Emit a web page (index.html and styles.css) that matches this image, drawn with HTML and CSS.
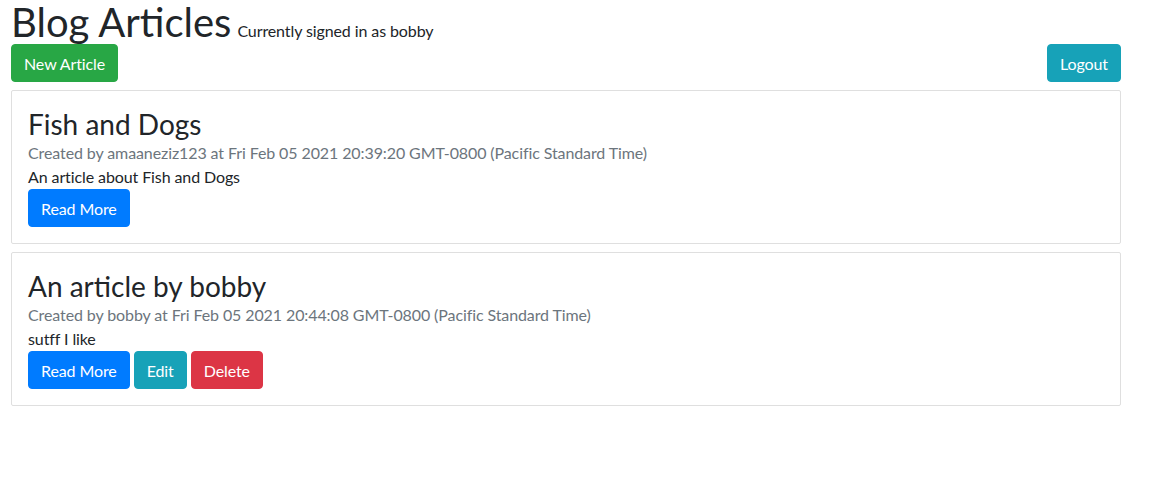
FILE: index.html
```html
<!DOCTYPE html>
<html lang="en">
<head>
<meta charset="utf-8">
<title>Blog Articles</title>
<link rel="stylesheet" href="styles.css">
</head>
<body>
<div class="container">
  <header class="page-header">
    <h1 class="title">Blog Articles</h1><span class="signed">Currently signed in as bobby</span>
  </header>
  <div class="toolbar">
    <a class="btn btn-success" href="#">New Article</a>
    <a class="btn btn-info" href="#">Logout</a>
  </div>
  <div class="card">
    <div class="card-body">
      <h3 class="card-title">Fish and Dogs</h3>
      <div class="card-subtitle">Created by amaaneziz123 at Fri Feb 05 2021 20:39:20 GMT-0800 (Pacific Standard Time)</div>
      <div class="card-text">An article about Fish and Dogs</div>
      <div class="actions">
        <a class="btn btn-primary" href="#">Read More</a>
      </div>
    </div>
  </div>
  <div class="card">
    <div class="card-body">
      <h3 class="card-title">An article by bobby</h3>
      <div class="card-subtitle">Created by bobby at Fri Feb 05 2021 20:44:08 GMT-0800 (Pacific Standard Time)</div>
      <div class="card-text">sutff I like</div>
      <div class="actions">
        <a class="btn btn-primary" href="#">Read More</a>
        <a class="btn btn-info" href="#">Edit</a>
        <a class="btn btn-danger" href="#">Delete</a>
      </div>
    </div>
  </div>
</div>
</body>
</html>
```
FILE: styles.css
```css
* { box-sizing: border-box; }
body {
  margin: 0;
  font-family: Lato, "Liberation Sans", sans-serif;
  font-size: 16px;
  line-height: 24px;
  color: #212529;
  background: #fff;
  letter-spacing: -0.1px;
}
.container {
  width: 1110px;
  margin-left: 11px;
}
.page-header {
  display: flex;
  align-items: baseline;
  height: 44px;
}
.title {
  margin: 0;
  font-size: 40px;
  line-height: 44px;
  font-weight: 400;
  letter-spacing: 0;
  color: #212529;
}
.signed {
  margin-left: 6px;
  font-size: 16px;
}
.toolbar {
  display: flex;
  justify-content: space-between;
  margin-bottom: 8px;
}
.btn {
  display: inline-block;
  padding: 7px 12px 5px;
  font-size: 16px;
  line-height: 24px;
  border: 1px solid transparent;
  border-radius: 4px;
  color: #fff;
  text-decoration: none;
}
.btn-success { background: #28a745; border-color: #28a745; }
.btn-info { background: #17a2b8; border-color: #17a2b8; }
.btn-primary { background: #007bff; border-color: #007bff; }
.btn-danger { background: #dc3545; border-color: #dc3545; }
.card {
  border: 1px solid rgba(0,0,0,.125);
  border-radius: 2px;
  margin-bottom: 8px;
}
.card-body {
  padding: 16px;
}
.card-title {
  margin: 0;
  font-size: 28px;
  line-height: 34px;
  font-weight: 400;
  letter-spacing: 0;
}
.card-subtitle {
  color: #6c757d;
}
.actions {
  display: flex;
  gap: 4px;
}
```
